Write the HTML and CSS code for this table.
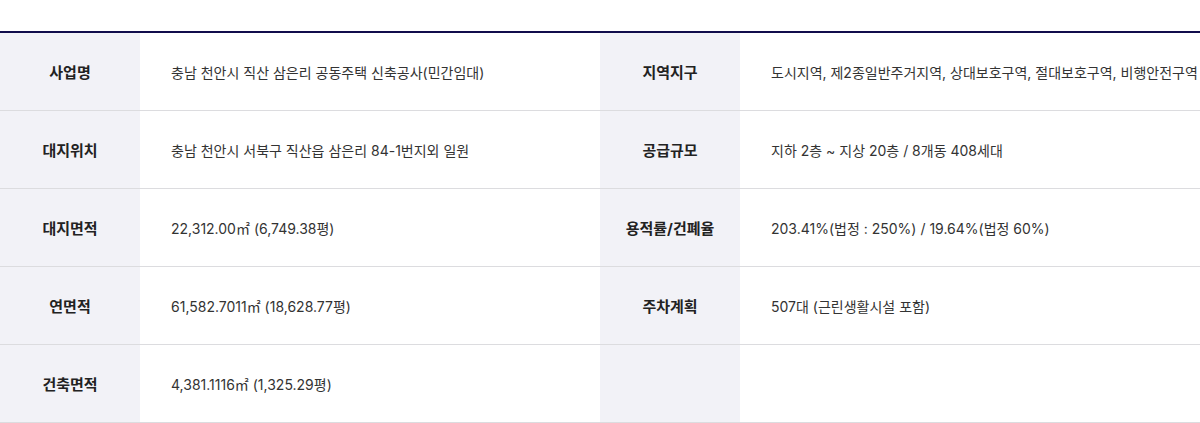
FILE: index.html
```html
<!DOCTYPE html>
<html lang="ko">
<head>
    <meta charset="UTF-8">
    <meta name="viewport" content="width=device-width, initial-scale=1.0">
    <title>사업개요</title>
    <link rel="stylesheet" href="styles.css">
</head>
<body>
    <div class="overview">
        <table class="info-table">
            <colgroup>
                <col class="col-label">
                <col class="col-value">
                <col class="col-label">
                <col>
            </colgroup>
            <tbody>
                <tr>
                    <th>사업명</th>
                    <td>충남 천안시 직산 삼은리 공동주택 신축공사(민간임대)</td>
                    <th>지역지구</th>
                    <td>도시지역, 제2종일반주거지역, 상대보호구역, 절대보호구역, 비행안전구역</td>
                </tr>
                <tr>
                    <th>대지위치</th>
                    <td>충남 천안시 서북구 직산읍 삼은리 84-1번지외 일원</td>
                    <th>공급규모</th>
                    <td>지하 2층 ~ 지상 20층 / 8개동 408세대</td>
                </tr>
                <tr>
                    <th>대지면적</th>
                    <td>22,312.00㎡ (6,749.38평)</td>
                    <th>용적률/건폐율</th>
                    <td>203.41%(법정 : 250%) / 19.64%(법정 60%)</td>
                </tr>
                <tr>
                    <th>연면적</th>
                    <td>61,582.7011㎡ (18,628.77평)</td>
                    <th>주차계획</th>
                    <td>507대 (근린생활시설 포함)</td>
                </tr>
                <tr>
                    <th>건축면적</th>
                    <td>4,381.1116㎡ (1,325.29평)</td>
                    <th></th>
                    <td></td>
                </tr>
            </tbody>
        </table>
    </div>
</body>
</html>
```

FILE: styles.css
```css
body {
    margin: 0;
    background: #fff;
    font-family: 'Inter', 'Noto Sans CJK KR', sans-serif;
    color: #333;
}
.overview {
    padding-top: 31px;
}
.info-table {
    width: 100%;
    border-collapse: collapse;
    table-layout: fixed;
    border-top: 2px solid #110d4c;
}
.col-label {
    width: 140px;
}
.col-value {
    width: 460px;
}
.info-table th,
.info-table td {
    height: 77px;
    padding: 0;
    border-bottom: 1px solid #dcdcdf;
    vertical-align: middle;
    white-space: nowrap;
    overflow: hidden;
}
.info-table th {
    background: #f2f2f7;
    color: #222;
    font-size: 15px;
    font-weight: 700;
    text-align: center;
}
.info-table td {
    padding-left: 31px;
    font-size: 14px;
    color: #333;
    text-align: left;
}
```
